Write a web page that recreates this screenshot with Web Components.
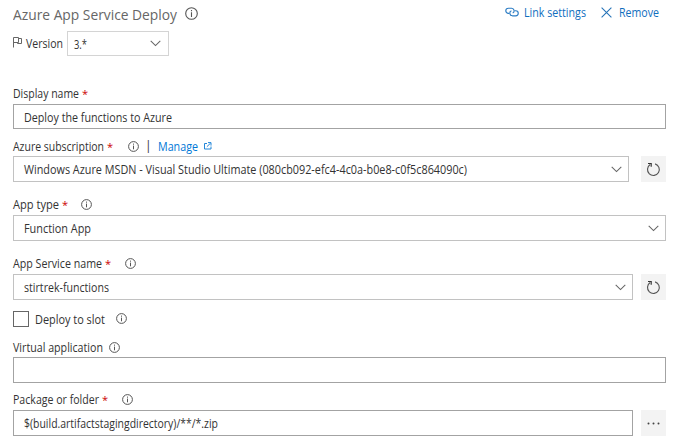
<!DOCTYPE html>
<html lang="en">
<head>
<meta charset="utf-8">
<title>Azure App Service Deploy</title>
<style>
html,body{margin:0;background:#fff}
body{font:12px/16px "Open Sans","Noto Sans",sans-serif;color:#333;width:679px;height:446px;overflow:hidden}
</style>
</head>
<body>
<task-form></task-form>
<script>
const define = (name, html, ready) => {
  const t = document.createElement('template');
  t.innerHTML = html;
  customElements.define(name, class extends HTMLElement {
    connectedCallback() {
      if (this.shadowRoot) return;
      this.attachShadow({mode: 'open'}).append(t.content.cloneNode(true));
      if (ready) ready(this, this.shadowRoot);
    }
  });
};

// Text condensed to occupy the width given in its "w" attribute.
define('fit-text', `<style>:host{display:inline-block;white-space:nowrap;flex:none}span{display:inline-block;transform-origin:0 0}</style><span><slot></slot></span>`, (el, root) => {
  const s = root.querySelector('span'), w = +el.getAttribute('w');
  const natural = s.getBoundingClientRect().width;
  const drop = el.classList.contains('title') ? 0 : 1;
  s.style.transform = `translateY(${drop}px) scaleX(${w / natural})`;
  el.style.width = w + 'px';
});

const icons = {
  info: [13, 13, '<g fill="none" stroke="#555"><circle cx="6.5" cy="6.5" r="4.9"/><path d="M6.5 5.6v3.7M6.5 3.6v1.1"/></g>'],
  infobig: [15, 15, '<g fill="none" stroke="#555" stroke-width="1.1"><circle cx="7.5" cy="7.5" r="5.8"/><path d="M7.5 6.3v4.6M7.5 4.1v1.2"/></g>'],
  flag: [10, 11, '<g fill="none" stroke="#666"><path d="M.5 .5v10M.5 .5h5v5h-5M5.5 1.5h3v5h-4v-1"/></g>'],
  chevron: [11, 7, '<path d="M.7 .8l4.8 4.8L10.3 .8" fill="none" stroke="#666" stroke-width="1.05"/>'],
  link: [14, 10, '<g fill="none" stroke="#2b7cc4" stroke-width="1.15"><path d="M4.3 6.4H3.4a2.5 2.5 0 0 1 0-5.200h3.200a2.600 2.600 0 0 1 1.100 4.900"/><path d="M9.700 3.700h1a2.500 2.500 0 0 1 0 5.100H7.300a2.600 2.600 0 0 1-.9-5"/></g>'],
  cross: [11, 11, '<path d="M.6 .6l9.800 9.800M10.400 .6L.6 10.400" fill="none" stroke="#2774b8" stroke-width="1.1"/>'],
  external: [8, 8, '<g fill="none" stroke="#2386d8"><path d="M3 1.500H.5v5.500h6.500V4.500M2.900 4.700L6.500 1.200M4 .6h3v3" /></g>'],
  refresh: [15, 15, '<g fill="none" stroke="#555" stroke-width="1.15"><path d="M9.100 1.900A5.900 5.900 0 1 1 4.200 2.600"/><path d="M2 1.500h3.200v3.200" stroke="#333"/></g>'],
  dots: [13, 3, '<g fill="#444"><circle cx="1.500" cy="1.500" r="1"/><circle cx="6.500" cy="1.500" r="1"/><circle cx="11.500" cy="1.500" r="1"/></g>']
};
define('ui-icon', `<style>:host{display:block;flex:none}svg{display:block}</style>`, (el, root) => {
  const [w, h, body] = icons[el.getAttribute('name')];
  root.innerHTML += `<svg width="${w}" height="${h}" viewBox="0 0 ${w} ${h}">${body}</svg>`;
});

define('field-label', `<style>:host{display:flex;align-items:center;height:16px}
b{font-weight:400;font-size:11px;color:#c00;width:5px;margin:2px 0 0 3px;display:none}:host([required]) b{display:block}
div{margin-left:var(--gap,15px);display:flex;align-items:center}</style><slot></slot><b>*</b><div><slot name="after"></slot></div>`);

define('text-box', `<style>:host{box-sizing:border-box;display:flex;align-items:center;justify-content:space-between;height:26px;flex:1;border:1px solid #a3a3a3;padding:0 8px 0 10px;background:#fff}
:host([pick]){border-color:#c2c2c2}ui-icon{display:none}:host([pick]) ui-icon{display:block}</style><slot></slot><ui-icon name="chevron"></ui-icon>`, (el, root) => {
  root.querySelector('ui-icon').style.marginRight = el.getAttribute('inset') || '-2px';
});

define('tool-button', `<style>:host{display:flex;align-items:center;justify-content:center;width:25px;height:26px;background:#f3f3f3;flex:none}</style><slot></slot>`);

define('task-form', `<style>
:host{display:block;box-sizing:border-box;width:679px;padding:5px 13px 0}
.row{display:flex;align-items:center}
.head{height:18px}
.title{font-size:15px;line-height:18px;color:#666;margin-right:7px}
.links{margin-left:auto;display:flex;align-items:center;color:#106ebe;margin-right:7px;margin-top:-4px}
.version{height:25px;margin-top:8px}
.version text-box{flex:none;width:102px;height:25px;margin-left:4px;padding-left:6px;border-color:#d4d4d4}
.check{height:17px;margin-top:10px}
.box{box-sizing:border-box;width:16px;height:16px;border:1px solid #666;margin-right:6px}
</style>
<div class="row head"><fit-text class="title" w="164">Azure App Service Deploy</fit-text><ui-icon name="infobig" style="margin-top:-1px"></ui-icon>
<div class="links"><ui-icon name="link" style="margin-right:5px"></ui-icon><fit-text w="62">Link settings</fit-text><ui-icon name="cross" style="margin:0 7px 0 15px"></ui-icon><fit-text w="40">Remove</fit-text></div></div>
<div class="row version"><ui-icon name="flag" style="margin-right:3px;margin-top:-2px"></ui-icon><fit-text w="37" style="margin-top:-2px">Version</fit-text><text-box pick inset="-1px"><fit-text w="13">3.*</fit-text></text-box></div>

<field-label required style="margin-top:29px"><fit-text w="66">Display name</fit-text></field-label>
<div class="row" style="margin-top:3px"><text-box style="height:25px"><fit-text w="148">Deploy the functions to Azure</fit-text></text-box></div>

<field-label required style="margin-top:9px"><fit-text w="91">Azure subscription</fit-text><ui-icon slot="after" name="info"></ui-icon><span slot="after" style="margin-left:5px;width:4px">|</span><fit-text slot="after" w="40" style="color:#0078d7;margin:0 6px 0 9px">Manage</fit-text><ui-icon slot="after" name="external"></ui-icon></field-label>
<div class="row" style="margin-top:2px;gap:12px"><text-box pick><fit-text w="443">Windows Azure MSDN - Visual Studio Ultimate (080cb092-efc4-4c0a-b0e8-c0f5c864090c)</fit-text></text-box><tool-button><ui-icon name="refresh"></ui-icon></tool-button></div>

<field-label required style="margin-top:14px;--gap:13px"><fit-text w="46">App type</fit-text><ui-icon slot="after" name="info"></ui-icon></field-label>
<div class="row" style="margin-top:3px"><text-box pick><fit-text w="67">Function App</fit-text></text-box></div>

<field-label required style="margin-top:14px;--gap:14px"><fit-text w="89">App Service name</fit-text><ui-icon slot="after" name="info"></ui-icon></field-label>
<div class="row" style="margin-top:3px;gap:8px"><text-box pick><fit-text w="85">stirtrek-functions</fit-text></text-box><tool-button><ui-icon name="refresh"></ui-icon></tool-button></div>

<div class="row check"><div class="box"></div><fit-text w="70">Deploy to slot</fit-text><ui-icon name="info" style="margin-left:10px"></ui-icon></div>

<field-label style="margin-top:12px;--gap:5px"><fit-text w="90">Virtual application</fit-text><ui-icon slot="after" name="info"></ui-icon></field-label>
<div class="row" style="margin-top:2px"><text-box></text-box></div>

<field-label required style="margin-top:8px;--gap:14px"><fit-text w="86">Package or folder</fit-text><ui-icon slot="after" name="info"></ui-icon></field-label>
<div class="row" style="margin-top:3px;gap:8px"><text-box><fit-text w="194">$(build.artifactstagingdirectory)/**/*.zip</fit-text></text-box><tool-button><ui-icon name="dots"></ui-icon></tool-button></div>
`);
</script>
</body>
</html>
